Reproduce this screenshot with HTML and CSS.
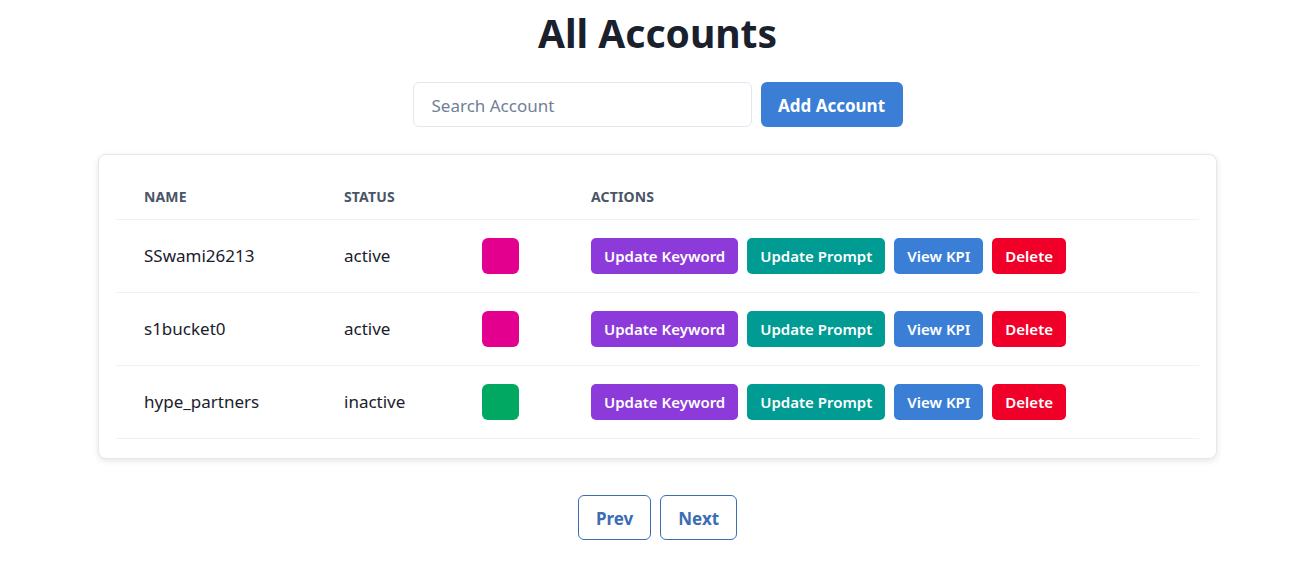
FILE: index.html
```html
<!DOCTYPE html>
<html lang="en">
<head>
<meta charset="utf-8">
<title>All Accounts</title>
<link rel="stylesheet" href="styles.css">
</head>
<body>
<main class="page">
  <h1 class="title">All Accounts</h1>
  <div class="toolbar">
    <input class="search" type="text" placeholder="Search Account">
    <button class="btn-add">Add Account</button>
  </div>
  <section class="card">
    <table class="table">
      <thead>
        <tr>
          <th class="c-name">Name</th>
          <th class="c-status">Status</th>
          <th class="c-color"></th>
          <th class="c-actions">Actions</th>
        </tr>
      </thead>
      <tbody>
        <tr>
          <td>SSwami26213</td>
          <td>active</td>
          <td><span class="swatch swatch-pink"></span></td>
          <td><div class="actions"><button class="act act-purple">Update Keyword</button><button class="act act-teal">Update Prompt</button><button class="act act-blue">View KPI</button><button class="act act-red">Delete</button></div></td>
        </tr>
        <tr>
          <td>s1bucket0</td>
          <td>active</td>
          <td><span class="swatch swatch-pink"></span></td>
          <td><div class="actions"><button class="act act-purple">Update Keyword</button><button class="act act-teal">Update Prompt</button><button class="act act-blue">View KPI</button><button class="act act-red">Delete</button></div></td>
        </tr>
        <tr>
          <td>hype_partners</td>
          <td>inactive</td>
          <td><span class="swatch swatch-green"></span></td>
          <td><div class="actions"><button class="act act-purple">Update Keyword</button><button class="act act-teal">Update Prompt</button><button class="act act-blue">View KPI</button><button class="act act-red">Delete</button></div></td>
        </tr>
      </tbody>
    </table>
  </section>
  <nav class="pager">
    <button class="page-btn">Prev</button>
    <button class="page-btn">Next</button>
  </nav>
</main>
</body>
</html>
```
FILE: styles.css
```css
* { box-sizing: border-box; }
body {
  margin: 0;
  background: #ffffff;
  font-family: "Noto Sans", "Open Sans", sans-serif;
  color: #1a202c;
}
.page {
  display: flex;
  flex-direction: column;
  align-items: center;
  padding-top: 8px;
  padding-left: 9px;
}
.title {
  margin: 0;
  font-size: 39px;
  line-height: 50px;
  font-weight: 700;
  color: #1a202c;
}
.toolbar {
  display: flex;
  gap: 9px;
  margin-top: 24px;
}
.search {
  width: 339px;
  height: 45px;
  border: 1px solid #e2e8f0;
  border-radius: 6px;
  padding: 2px 18px 0;
  font-family: inherit;
  font-size: 17px;
  color: #1a202c;
  outline: none;
}
.search::placeholder { color: #718096; }
.btn-add {
  width: 142px;
  height: 45px;
  border: none;
  border-radius: 6px;
  padding: 2px 0 0;
  background: #3a7fd5;
  color: #fff;
  font-family: inherit;
  font-size: 17px;
  font-weight: 700;
}
.card {
  width: 1119px;
  margin-top: 27px;
  background: #fff;
  border: 1px solid #e2e8f0;
  border-radius: 8px;
  box-shadow: 0 2px 6px rgba(0,0,0,0.1);
  padding: 17px 17px 19px;
}
.table {
  width: 100%;
  border-collapse: collapse;
}
.table th {
  text-align: left;
  font-size: 14px;
  font-weight: 700;
  text-transform: uppercase;
  letter-spacing: 0.01em;
  color: #4a5568;
  height: 47px;
  padding: 2px 0 0 28px;
  border-bottom: 1px solid #edf2f7;
}
.table td {
  height: 73px;
  padding: 0 0 0 28px;
  font-size: 17px;
  border-bottom: 1px solid #edf2f7;
  vertical-align: middle;
}
.c-name { width: 200px; }
.c-status { width: 138px; }
.c-color { width: 109px; }
.swatch {
  display: block;
  width: 37px;
  height: 36px;
  border-radius: 6px;
}
.swatch-pink { background: #e4008e; }
.swatch-green { background: #00a862; }
.actions {
  display: flex;
  gap: 9px;
}
.act {
  height: 36px;
  border: none;
  border-radius: 5px;
  padding: 0 13px;
  color: #fff;
  font-family: inherit;
  font-size: 15px;
  font-weight: 600;
}
.act-purple { background: #8c3ad9; }
.act-teal { background: #009b93; }
.act-blue { background: #3a7fd5; }
.act-red { background: #f00028; }
.pager {
  display: flex;
  gap: 9px;
  margin-top: 36px;
}
.page-btn {
  height: 45px;
  padding: 2px 17px 0;
  background: #fff;
  border: 1px solid #3b6db5;
  border-radius: 6px;
  color: #3b6db5;
  font-family: inherit;
  font-size: 17px;
  font-weight: 700;
}
```
